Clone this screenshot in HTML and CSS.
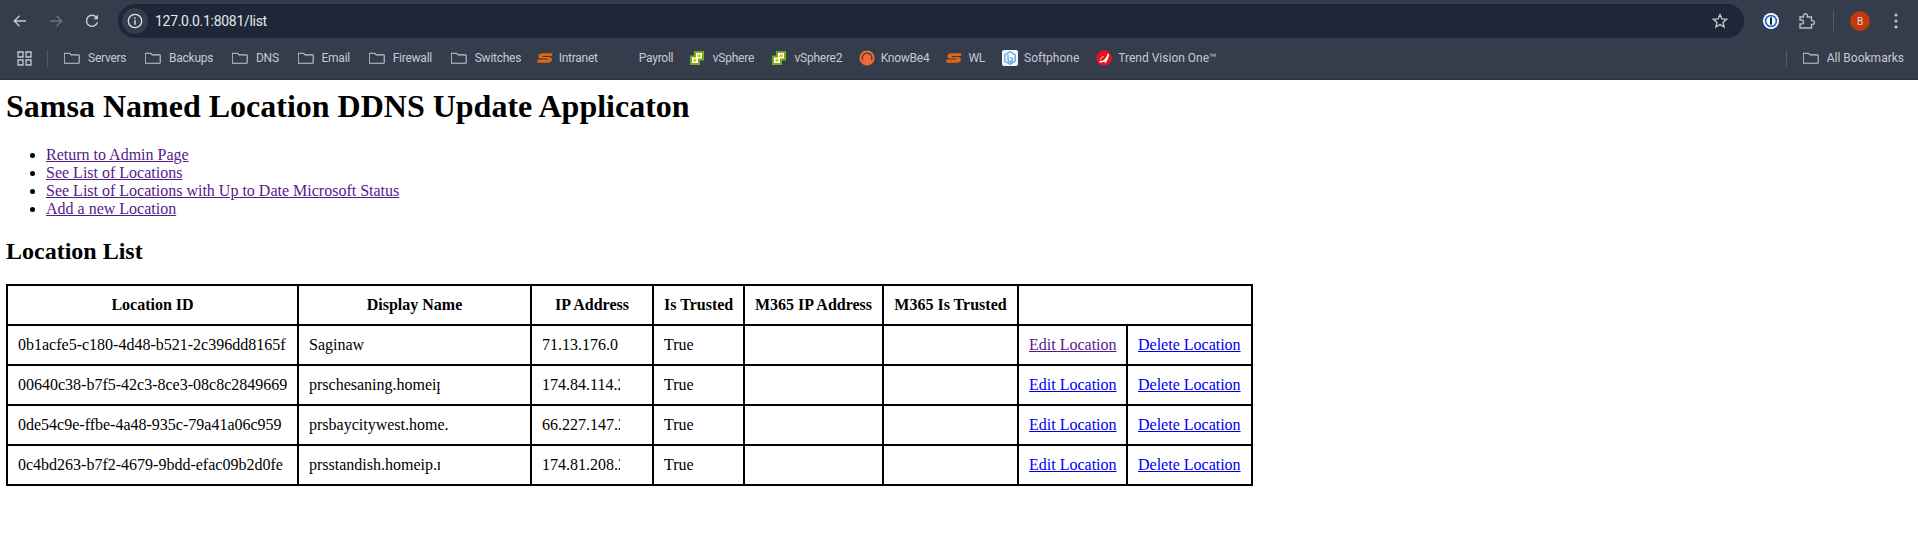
FILE: index.html
```html
<!DOCTYPE html>
<html lang="en">
<head>
    <meta charset="UTF-8">
    <title>Samsa Named Location DDNS Update Applicaton</title>
    <link rel="stylesheet" href="styles.css">
</head>
<body>
    <svg class="defs" width="0" height="0">
        <symbol id="folder" viewBox="0 0 16 16">
            <path d="M.8 3.2h4.800l1.600 1.700h7.400a.6.6 0 0 1 .6.6v7.200a.6.6 0 0 1-.6.6H.8a.6.6 0 0 1-.6-.6V3.800a.6.6 0 0 1 .6-.6z" fill="none" stroke="#c3c8d1" stroke-width="1.100"/>
        </symbol>
        <symbol id="samsa" viewBox="0 0 16 16">
            <path d="M15.500 3.200H6C2.800 3.200 1.600 4.400 1.400 6c-.2 1.700 1 2.600 3 2.600h5.800c.8 0 .8 1-.2 1H.5L.2 12.800h10c3 0 4.600-1.300 4.800-3 .2-1.800-1.200-2.900-3.200-2.900H6.200c-.8 0-.7-.9.2-.9h8.400z" fill="#e2650f"/>
        </symbol>
        <symbol id="vsphere" viewBox="0 0 16 16">
            <path d="M5 1h10v9.500h-4V15H1V5.500h4z" fill="#6fae1a"/>
            <path d="M7 3h6v5.500H9V13H3V7.500h4z" fill="#fff"/>
            <rect x="8.600" y="4.200" width="3" height="3" fill="#f7b21a"/>
            <rect x="4.400" y="8.800" width="3" height="3" fill="#f7b21a"/>
        </symbol>
    </svg>

    <header class="browser">
        <div class="toolbar">
            <div class="nav-btn">
                <svg width="16" height="16" viewBox="0 0 16 16"><path d="M14 8H2.500M7.500 2.800L2.300 8l5.200 5.200" fill="none" stroke="#c5cad3" stroke-width="1.400"/></svg>
            </div>
            <div class="nav-btn">
                <svg width="16" height="16" viewBox="0 0 16 16"><path d="M2 8h11.500M8.500 2.800L13.700 8l-5.200 5.200" fill="none" stroke="#6d7380" stroke-width="1.400"/></svg>
            </div>
            <div class="nav-btn">
                <svg width="16" height="16" viewBox="0 0 16 16"><path d="M13.300 9.200A5.500 5.500 0 1 1 12.300 4.400" fill="none" stroke="#c5cad3" stroke-width="1.500"/><path d="M14 1.600v4.600H9.400z" fill="#c5cad3"/></svg>
            </div>
            <div class="omnibox">
                <span class="site-info">
                    <svg width="16" height="16" viewBox="0 0 16 16"><circle cx="8" cy="8" r="6.700" fill="none" stroke="#dfe2e7" stroke-width="1.300"/><rect x="7.300" y="7" width="1.400" height="4.800" fill="#dfe2e7"/><rect x="7.300" y="4.300" width="1.400" height="1.500" fill="#dfe2e7"/></svg>
                </span>
                <span class="url">127.0.0.1:8081/list</span>
                <svg class="star" width="16" height="16" viewBox="0 0 16 16"><path d="M8 1.600l1.900 4.300 4.700.4-3.600 3.100 1.100 4.600L8 11.600l-4.100 2.400L5 9.400 1.400 6.300l4.700-.4z" fill="none" stroke="#c5cad3" stroke-width="1.300"/></svg>
            </div>
            <div class="nav-btn">
                <svg width="18" height="18" viewBox="0 0 18 18"><circle cx="9" cy="9" r="8" fill="#fff"/><circle cx="9" cy="9" r="6.300" fill="#1a6fe0"/><circle cx="9" cy="9" r="4.500" fill="#fff"/><rect x="8" y="5.300" width="2" height="7.400" rx=".6" fill="#17202e"/></svg>
            </div>
            <div class="nav-btn">
                <svg width="18" height="18" viewBox="0 0 18 18"><path d="M2 5h3.500V3.600a1.900 1.900 0 0 1 3.800 0V5h4.200v3.600h1a1.900 1.900 0 0 1 0 3.800h-1V16H2v-4h1.500a2 2 0 0 0 0-4H2z" fill="none" stroke="#b6bcc8" stroke-width="1.400"/></svg>
            </div>
            <span class="bar-sep"></span>
            <div class="nav-btn">
                <span class="avatar">B</span>
            </div>
            <div class="nav-btn">
                <svg width="4" height="16" viewBox="0 0 4 16"><circle cx="2" cy="2" r="1.500" fill="#c5cad3"/><circle cx="2" cy="8" r="1.500" fill="#c5cad3"/><circle cx="2" cy="14" r="1.500" fill="#c5cad3"/></svg>
            </div>
        </div>

        <div class="bookmarks">
            <svg class="apps" width="15" height="15" viewBox="0 0 15 15">
                <path d="M1 1h5v5H1zM9 1h5v5H9zM1 9h5v5H1zM9 9h5v5H9z" fill="none" stroke="#c5cad3" stroke-width="1.300"/>
            </svg>
            <span class="bar-sep short"></span>
            <div class="bm"><svg class="bm-icon"><use href="#folder"/></svg>Servers</div>
            <div class="bm"><svg class="bm-icon"><use href="#folder"/></svg>Backups</div>
            <div class="bm"><svg class="bm-icon"><use href="#folder"/></svg>DNS</div>
            <div class="bm"><svg class="bm-icon"><use href="#folder"/></svg>Email</div>
            <div class="bm"><svg class="bm-icon"><use href="#folder"/></svg>Firewall</div>
            <div class="bm gap-s"><svg class="bm-icon"><use href="#folder"/></svg>Switches</div>
            <div class="bm tight"><svg class="bm-icon near"><use href="#samsa"/></svg>Intranet</div>
            <div class="bm gap-s"><span class="bm-icon"></span>Payroll</div>
            <div class="bm gap-m"><svg class="bm-icon"><use href="#vsphere"/></svg>vSphere</div>
            <div class="bm gap-m"><svg class="bm-icon"><use href="#vsphere"/></svg>vSphere2</div>
            <div class="bm tight">
                <svg class="bm-icon near" viewBox="0 0 16 16"><circle cx="8" cy="8" r="7.600" fill="#f26a35"/><path d="M3.800 10.200A4.800 4.800 0 1 1 12.400 10" fill="none" stroke="#3a3f4c" stroke-width="1.300"/></svg>KnowBe4
            </div>
            <div class="bm tight"><svg class="bm-icon near"><use href="#samsa"/></svg>WL</div>
            <div class="bm tight full-text">
                <svg class="bm-icon near" viewBox="0 0 16 16"><rect width="16" height="16" rx="2" fill="#f3f6fa"/><path d="M8 1.800l5.200 3v6.400L8 14.200l-5.200-3V4.800z" fill="none" stroke="#5aa3dc" stroke-width="1.300"/><path d="M6 4.800v5a2.200 2.200 0 1 0 2.200-2.200" fill="none" stroke="#5aa3dc" stroke-width="1.300"/></svg>Softphone
            </div>
            <div class="bm tight full-text">
                <svg class="bm-icon near" viewBox="0 0 16 16"><circle cx="8" cy="8" r="7.800" fill="#e3131f"/><path d="M3.500 11.500c3.500.8 7-2 9-7.500-.6 3.400-1.500 6-3.600 8.700" fill="none" stroke="#fff" stroke-width="1.500"/><path d="M4.500 9.500c.5-1.500 1.500-2.500 3-3" fill="none" stroke="#fff" stroke-width="1"/></svg>Trend Vision One™
            </div>
            <span class="bar-sep short all-sep"></span>
            <div class="bm full-text"><svg class="bm-icon"><use href="#folder"/></svg>All Bookmarks</div>
        </div>
    </header>

    <div class="page">
        <h1>Samsa Named Location DDNS Update Applicaton</h1>

        <ul>
            <li><a href="#admin">Return to Admin Page</a></li>
            <li><a href="#list">See List of Locations</a></li>
            <li><a href="#status">See List of Locations with Up to Date Microsoft Status</a></li>
            <li><a href="#new">Add a new Location</a></li>
        </ul>

        <h2>Location List</h2>

        <table>
            <thead>
                <tr>
                    <th class="col-id">Location ID</th>
                    <th class="col-name">Display Name</th>
                    <th class="col-ip">IP Address</th>
                    <th class="col-trust">Is Trusted</th>
                    <th class="col-mip">M365 IP Address</th>
                    <th class="col-mtrust">M365 Is Trusted</th>
                    <th class="col-edit"></th>
                    <th class="col-del"></th>
                </tr>
            </thead>
            <tbody>
                <tr>
                    <td>0b1acfe5-c180-4d48-b521-2c396dd8165f</td>
                    <td><span class="clip name">Saginaw</span></td>
                    <td><span class="clip ip">71.13.176.0</span></td>
                    <td>True</td>
                    <td></td>
                    <td></td>
                    <td><a href="#edit1">Edit Location</a></td>
                    <td><a class="fresh" href="#del1">Delete Location</a></td>
                </tr>
                <tr>
                    <td>00640c38-b7f5-42c3-8ce3-08c8c2849669</td>
                    <td><span class="clip name">prschesaning.homeip.net</span></td>
                    <td><span class="clip ip">174.84.114.21</span></td>
                    <td>True</td>
                    <td></td>
                    <td></td>
                    <td><a class="fresh" href="#edit2">Edit Location</a></td>
                    <td><a class="fresh" href="#del2">Delete Location</a></td>
                </tr>
                <tr>
                    <td>0de54c9e-ffbe-4a48-935c-79a41a06c959</td>
                    <td><span class="clip name wide">prsbaycitywest.home.net</span></td>
                    <td><span class="clip ip">66.227.147.21</span></td>
                    <td>True</td>
                    <td></td>
                    <td></td>
                    <td><a class="fresh" href="#edit3">Edit Location</a></td>
                    <td><a class="fresh" href="#del3">Delete Location</a></td>
                </tr>
                <tr>
                    <td>0c4bd263-b7f2-4679-9bdd-efac09b2d0fe</td>
                    <td><span class="clip name">prsstandish.homeip.net</span></td>
                    <td><span class="clip ip">174.81.208.21</span></td>
                    <td>True</td>
                    <td></td>
                    <td></td>
                    <td><a class="fresh" href="#edit4">Edit Location</a></td>
                    <td><a class="fresh" href="#del4">Delete Location</a></td>
                </tr>
            </tbody>
        </table>
    </div>
</body>
</html>
```

FILE: styles.css
```css
body {
    margin: 0;
    background-color: #fff;
    color: #000;
    font-family: "Liberation Serif", serif;
    font-size: 16px;
}
.defs {
    position: absolute;
}

/* browser chrome */
.browser {
    background-color: #353c4c;
    font-family: Roboto, sans-serif;
    color: #c5cad3;
}
.toolbar {
    display: flex;
    align-items: center;
    height: 42px;
    padding: 0 4px 0 2px;
    box-sizing: border-box;
}
.nav-btn {
    display: flex;
    align-items: center;
    justify-content: center;
    width: 36px;
    height: 34px;
    flex: none;
}
.omnibox {
    display: flex;
    align-items: center;
    flex: 1;
    height: 34px;
    margin: 0 9px 0 8px;
    padding: 0 16px 0 4px;
    background-color: #1e2738;
    border-radius: 17px;
}
.site-info {
    display: flex;
    align-items: center;
    justify-content: center;
    width: 26px;
    height: 26px;
    background-color: #353c4c;
    border-radius: 50%;
}
.url {
    flex: 1;
    margin-left: 7px;
    font-size: 14px;
    letter-spacing: -0.3px;
    color: #e6e8ec;
}
.bar-sep {
    width: 1px;
    height: 20px;
    margin: 0 8px;
    background-color: #545b6a;
    flex: none;
}
.bar-sep.short {
    height: 17px;
}
.avatar {
    display: flex;
    align-items: center;
    justify-content: center;
    width: 20px;
    height: 20px;
    background-color: #c0390f;
    border-radius: 50%;
    color: #f4d9d0;
    font-size: 10px;
}
.bookmarks {
    display: flex;
    align-items: center;
    height: 38px;
    padding: 0 14px 5px 17px;
    box-sizing: border-box;
    font-size: 12px;
    letter-spacing: -0.25px;
    border-bottom: 1px solid #2b3140;
}
.apps {
    flex: none;
}
.bookmarks .bar-sep {
    margin: 0 16px 0 15px;
}
.bookmarks .all-sep {
    margin: 0 16px 0 auto;
}
.bm {
    display: flex;
    align-items: center;
    margin-right: 18.75px;
    white-space: nowrap;
}
.bm.tight {
    margin-right: 17px;
}
.bm.gap-s {
    margin-right: 15.5px;
}
.bm.gap-m {
    margin-right: 16.5px;
}
.bm.full-text {
    letter-spacing: 0;
}
.bm:last-child {
    margin-right: 0;
}
.bm-icon {
    display: block;
    width: 16px;
    height: 16px;
    margin-right: 8px;
    flex: none;
}
.bm-icon.near {
    margin-right: 6px;
}

/* page */
.page {
    padding: 0 6px;
}
h1 {
    margin: 8px 0 21px;
}
ul {
    margin: 20px 0;
}
h2 {
    margin: 20px 0 19px;
}
a {
    color: #551a8b;
}
a.fresh {
    color: #0000ee;
}
table {
    border-collapse: collapse;
    table-layout: fixed;
    width: 1247px;
}
th, td {
    box-sizing: border-box;
    height: 40px;
    padding: 10px;
    border: 2px solid #000;
    white-space: nowrap;
}
.col-id { width: 291px; }
.col-name { width: 233px; }
.col-ip { width: 122px; }
.col-trust { width: 91px; }
.col-mip { width: 139px; }
.col-mtrust { width: 135px; }
.col-edit { width: 109px; border-right: none; }
.col-del { width: 125px; border-left: none; }
.clip {
    display: block;
    overflow: hidden;
}
.clip.name {
    width: 131px;
}
.clip.name.wide {
    width: 139px;
}
.clip.ip {
    width: 78px;
}
```
